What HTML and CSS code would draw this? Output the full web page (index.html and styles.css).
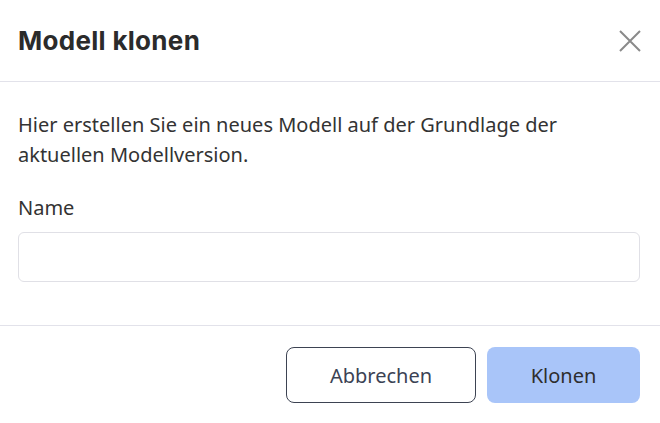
FILE: index.html
```html
<!DOCTYPE html>
<html lang="de">
<head>
<meta charset="utf-8">
<link rel="stylesheet" href="styles.css">
</head>
<body>
<div class="dialog">
  <div class="header">
    <h1 class="title">Modell klonen</h1>
    <button class="close" aria-label="Schließen">
      <svg width="22" height="22" viewBox="0 0 22 22"><path d="M1 1L21 21M21 1L1 21" stroke="#8a8a8a" stroke-width="2" fill="none"/></svg>
    </button>
  </div>
  <div class="body">
    <p class="intro">Hier erstellen Sie ein neues Modell auf der Grundlage der aktuellen Modellversion.</p>
    <label class="label" for="name">Name</label>
    <input class="input" id="name" type="text">
  </div>
  <div class="footer">
    <button class="btn btn-secondary">Abbrechen</button>
    <button class="btn btn-primary">Klonen</button>
  </div>
</div>
</body>
</html>
```
FILE: styles.css
```css
html, body {
  margin: 0;
  padding: 0;
  background: #fff;
}
body {
  font-family: "Noto Sans", "Open Sans", sans-serif;
  color: #333;
}
.dialog {
  width: 660px;
  height: 423px;
  display: flex;
  flex-direction: column;
}
.header {
  height: 82px;
  box-sizing: border-box;
  border-bottom: 1px solid #e2e2ea;
  display: flex;
  align-items: center;
  justify-content: space-between;
  padding: 0 19px 0 18px;
}
.title {
  margin: 0;
  font-family: "Inter", sans-serif;
  font-weight: 700;
  font-size: 26px;
  letter-spacing: 0.3px;
  color: #2b2b2b;
}
.close {
  border: 0;
  background: none;
  padding: 0;
  width: 22px;
  height: 22px;
  display: flex;
}
.body {
  padding: 28px 20px 43px 18px;
  border-bottom: 1px solid #e2e2ea;
  display: flex;
  flex-direction: column;
}
.intro {
  margin: 0 0 23px;
  max-width: 570px;
  font-size: 20px;
  line-height: 30px;
}
.label {
  font-size: 20px;
  line-height: 30px;
  margin-bottom: 9px;
}
.input {
  height: 50px;
  box-sizing: border-box;
  border: 1px solid #e0e0e6;
  border-radius: 6px;
  margin: 0;
  font: inherit;
}
.footer {
  flex: 1;
  display: flex;
  justify-content: flex-end;
  align-items: flex-start;
  gap: 11px;
  padding: 21px 20px 0 0;
}
.btn {
  height: 56px;
  border-radius: 8px;
  font-family: "Noto Sans", sans-serif;
  font-size: 20px;
  cursor: pointer;
}
.btn-secondary {
  width: 190px;
  background: #fff;
  border: 1px solid #3d4352;
  color: #3b4254;
}
.btn-primary {
  width: 153px;
  background: #a9c5f9;
  border: 0;
  color: #2e2e2e;
}
```
